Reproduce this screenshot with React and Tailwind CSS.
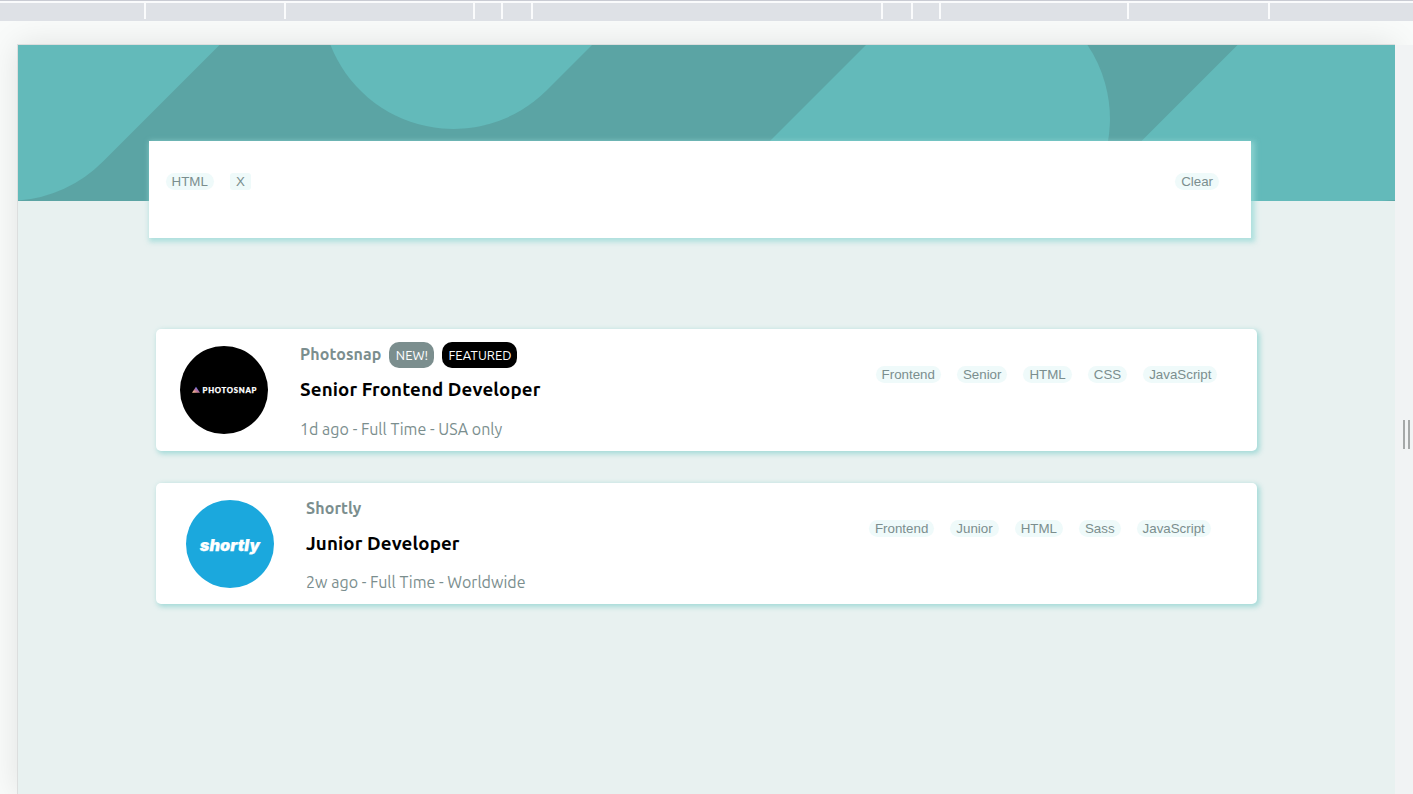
import React from "react";

const tabs = [
  "w-[144px]", "w-[138px]", "w-[187px]", "w-[26px]", "w-[28px]", "w-[348px]",
  "w-[28px]", "w-[26px]", "w-[186px]", "w-[139px]", "w-[143px]",
];

function BrowserStrip() {
  return (
    <div className="h-[21px] shrink-0 border-t border-[#c9cbd3] bg-[#dee1e6]">
      <div className="h-[2px] bg-[#fafbfc]" />
      <div className="flex h-4 gap-[2px] bg-[#fafbfc]">
        {tabs.map((w, i) => (
          <div key={i} className={`${w} h-4 shrink-0 bg-[#dee1e6]`} />
        ))}
      </div>
    </div>
  );
}

function Pill({ children, className = "rounded-full" }) {
  return (
    <button className={`h-[17px] px-[6px] text-[13.333px] leading-[17px] whitespace-nowrap bg-[#effafa] text-[#7b8e8e] font-['Liberation_Sans',Arial,sans-serif] ${className}`}>
      {children}
    </button>
  );
}

function PhotosnapLogo() {
  return (
    <svg viewBox="0 0 88 88" className="size-[88px] shrink-0">
      <defs>
        <linearGradient id="peak" x1="0" y1="1" x2="1" y2="0">
          <stop offset="0.1" stopColor="#ffc593" />
          <stop offset="0.45" stopColor="#bc7198" />
          <stop offset="0.8" stopColor="#5a77ff" />
        </linearGradient>
      </defs>
      <circle cx="44" cy="44" r="44" fill="#000" />
      <path d="M12 46.8 16 40.8 20 46.8Z" fill="url(#peak)" />
      <text x="22.6" y="46.7" fill="#fff" stroke="#fff" strokeWidth="0.25" fontFamily="Lato, sans-serif" fontWeight="900" fontSize="7.7" textLength="53.8" lengthAdjust="spacing">PHOTOSNAP</text>
    </svg>
  );
}

function ShortlyLogo() {
  return (
    <svg viewBox="0 0 88 88" className="size-[88px] shrink-0">
      <circle cx="44" cy="44" r="44" fill="#1ba8dd" />
      <text x="13.8" y="51" fill="#fff" stroke="#fff" strokeWidth="0.25" fontFamily="Inter, sans-serif" fontStyle="italic" fontWeight="900" fontSize="16" textLength="60" lengthAdjust="spacingAndGlyphs">shortly</text>
    </svg>
  );
}

function Job({ logo, company, badges, title, meta, metaClass, tags, className }) {
  return (
    <article className={`flex w-[1101px] rounded-[5px] bg-white shadow-[2px_2px_5px_1px_rgba(130,208,205,0.65)] ${className}`}>
      <div className="pt-[17px]">{logo}</div>
      <div className="ml-8 pt-[13px]">
        <div className="flex h-[26px] items-start gap-2">
          <h2 className="text-[16px] leading-6 font-bold tracking-[0.1px] whitespace-nowrap text-[#7b8e8e]">{company}</h2>
          {badges}
        </div>
        <h3 className="mt-[8px] text-[18.72px] leading-7 font-bold tracking-[0.12px] whitespace-nowrap text-black">{title}</h3>
        <p className={`text-[16px] leading-6 font-[450] tracking-[0.02px] whitespace-nowrap text-[#7b8e8e] ${metaClass}`}>{meta}</p>
      </div>
      <div className="ml-auto flex gap-4 pt-[37px]">
        {tags.map((t) => <Pill key={t}>{t}</Pill>)}
      </div>
    </article>
  );
}

export default function App() {
  return (
    <div className="flex h-[794px] w-[1413px] flex-col overflow-hidden bg-[#f9fbfa] font-[Ubuntu,'Noto_Sans',sans-serif]">
      <BrowserStrip />
      <div className="flex min-h-0 flex-1 overflow-hidden pt-[23px] pl-[17px]">
        <main className="flex w-[1378px] shrink-0 flex-col border-t border-l border-[#dcdede] bg-[#e8f1f0] shadow-[0_0_30px_rgba(0,0,0,0.1)]">
          <header className="h-[156px] shrink-0 bg-[#5ba4a4]">
            <svg viewBox="0 0 1377 156" className="block h-[156px] w-[1377px]" fill="#63baba">
              <path d="M0 0H201.5L85 116.5A132.8 132.8 0 0 1 0 155.6Z" />
              <path d="M312.5 0A132 132 0 0 0 528.5 45.5L574 0Z" />
              <path d="M848 0 692 156H1063.5A132.8 132.8 0 0 0 1069.5 0Z" />
              <path d="M1219.5 0 1063.5 156H1364L1377 155V0Z" />
            </svg>
          </header>
          <section className="z-10 -mt-[60px] ml-[131px] flex h-[97px] w-[1102px] shrink-0 items-start gap-4 bg-white pt-8 pr-8 pl-[16.6px] shadow-[2px_2px_5px_2px_rgba(150,216,214,0.7)]">
            <Pill>HTML</Pill>
            <Pill className="rounded-[3px]">X</Pill>
            <div className="ml-auto flex"><Pill>Clear</Pill></div>
          </section>
          <section className="mt-[91px] ml-[138px] flex flex-col gap-8">
            <Job
              className="h-[122px] pr-[39.6px] pl-6"
              logo={<PhotosnapLogo />}
              company="Photosnap"
              badges={
                <>
                  <span className="h-[26px] w-[45px] rounded-[10px] bg-[#7b8e8e] text-center text-[13px] leading-[26px] font-[450] tracking-[0.05px] text-white">NEW!</span>
                  <span className="h-[26px] w-[75px] rounded-[10px] bg-black text-center text-[13px] leading-[26px] font-[450] tracking-[0.05px] text-white">FEATURED</span>
                </>
              }
              title="Senior Frontend Developer"
              meta="1d ago - Full Time - USA only"
              metaClass="mt-[13px]"
              tags={["Frontend", "Senior", "HTML", "CSS", "JavaScript"]}
            />
            <Job
              className="h-[121px] pr-[46.2px] pl-[30px]"
              logo={<ShortlyLogo />}
              company="Shortly"
              title="Junior Developer"
              meta="2w ago - Full Time - Worldwide"
              metaClass="mt-[12px]"
              tags={["Frontend", "Junior", "HTML", "Sass", "JavaScript"]}
            />
          </section>
        </main>
        <aside className="z-10 flex w-[18px] shrink-0 justify-end bg-[#f1f3f4] mt-px pt-[375px] pr-[3px]">
          <div className="flex h-[29px] gap-[3px]">
            <i className="w-[2px] bg-[#a5a8a8]" />
            <i className="w-[2px] bg-[#a5a8a8]" />
          </div>
        </aside>
      </div>
    </div>
  );
}
